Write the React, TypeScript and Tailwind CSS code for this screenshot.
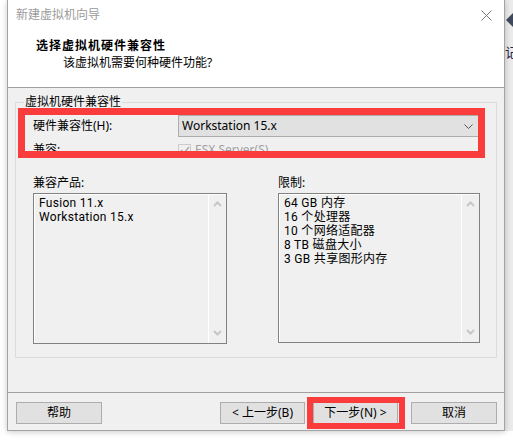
import React from "react";

const FONT = { fontFamily: '"Noto Sans", "Noto Sans CJK SC", sans-serif' };
const LIST_FONT = { fontFamily: 'Roboto, "Noto Sans CJK SC", sans-serif' };

function ScrollChevron({ up }: { up?: boolean }) {
  return (
    <svg width="9" height="6" viewBox="0 0 9 6" className="block">
      <path
        d={up ? "M1 5 L4.5 1.5 L8 5" : "M1 1 L4.5 4.5 L8 1"}
        fill="none"
        stroke="#c6c6c6"
        strokeWidth="2"
      />
    </svg>
  );
}

function ListBox({ items, width, height }: { items: string[]; width: number; height: number }) {
  return (
    <div
      className="flex border border-[#828282] bg-[#f0f0f0] shadow-[inset_1px_1px_0_#ffffff]"
      style={{ width, height }}
    >
      <div className="flex-1 pl-[5px] pt-[2px] text-[12px] leading-[14px] tracking-[0.3px] text-black" style={LIST_FONT}>
        {items.map((t) => (
          <div key={t} className="h-[14px]">
            {t}
          </div>
        ))}
      </div>
      <div className="w-[18px] border-l border-white flex flex-col items-center justify-between pt-[7px] pb-[7px]">
        <ScrollChevron up />
        <ScrollChevron />
      </div>
    </div>
  );
}

function Button({ label, width }: { label: React.ReactNode; width: number }) {
  return (
    <div
      className="h-[22px] border border-[#adadad] bg-[#e1e1e1] flex items-center justify-center text-[12px] text-black"
      style={{ width }}
    >
      {label}
    </div>
  );
}

export default function App() {
  return (
    <div className="w-[513px] h-[440px] bg-white flex overflow-hidden" style={FONT}>
      <div className="w-[7px] shrink-0" />
      {/* wizard window */}
      <div className="w-[498px] h-[431px] shrink-0 border-x border-b border-[#a3a3a3] bg-[#f0f0f0] flex flex-col shadow-[0_1px_6px_rgba(0,0,0,0.22)] z-10">
        {/* header */}
        <div className="h-[88px] bg-white border-b border-[#a0a0a0] flex flex-col">
          <div className="h-[30px] flex items-center justify-between pl-[8px] pr-[12px]">
            <span className="text-[12px] leading-[16px] text-[#9b9b9b]">新建虚拟机向导</span>
            <svg width="11" height="11" viewBox="0 0 11 11">
              <path d="M0.5 0.5 L10.5 10.5 M10.5 0.5 L0.5 10.5" stroke="#777" strokeWidth="1" />
            </svg>
          </div>
          <div className="mt-[8px] pl-[28px] text-[12px] leading-[16px] font-bold tracking-[1px] text-black">
            选择虚拟机硬件兼容性
          </div>
          <div className="mt-[1px] pl-[55px] text-[12px] leading-[16px] text-black">
            该虚拟机需要何种硬件功能?
          </div>
        </div>

        {/* body */}
        <div className="h-[304px] pt-[14px] px-[7px]">
          <div className="relative h-[256px] border border-[#dcdcdc]">
            <span className="absolute left-[8px] top-[-9px] px-[1px] bg-[#f0f0f0] text-[12px] leading-[16px] text-black">
              虚拟机硬件兼容性
            </span>

            <div className="flex items-center pl-[17px] mt-[12px]">
              <span className="w-[145px] text-[12px] leading-[16px] text-black">硬件兼容性(H):</span>
              <div className="w-[301px] h-[22px] border border-[#adadad] bg-[#e1e1e1] flex items-center justify-between pl-[3px] pr-[5px]">
                <span className="text-[12px] text-black">Workstation 15.x</span>
                <svg width="9" height="5" viewBox="0 0 9 5">
                  <path d="M0.5 0.5 L4.5 4.5 L8.5 0.5" fill="none" stroke="#555" strokeWidth="1" />
                </svg>
              </div>
            </div>

            <div className="flex items-center pl-[17px] mt-[4px] h-[18px]">
              <span className="w-[145px] text-[12px] leading-[16px] text-black">兼容:</span>
              <div className="w-[13px] h-[13px] border border-[#cccccc] bg-[#f0f0f0] flex items-center justify-center">
                <svg width="10" height="8" viewBox="0 0 10 8">
                  <path d="M1 4 L4 7 L9 1" fill="none" stroke="#a8a8a8" strokeWidth="1.4" />
                </svg>
              </div>
              <span className="ml-[4px] text-[12px] leading-[16px] text-[#a0a0a0]">ESX Server(S)</span>
            </div>

            <div className="flex pl-[17px] mt-[16px]">
              <div className="w-[194px] flex flex-col">
                <span className="text-[12px] leading-[16px] text-black mb-[2px]">兼容产品:</span>
                <ListBox items={["Fusion 11.x", "Workstation 15.x"]} width={194} height={151} />
              </div>
              <div className="w-[202px] ml-[51px] flex flex-col">
                <span className="text-[12px] leading-[16px] text-black mb-[2px]">限制:</span>
                <ListBox
                  items={["64 GB 内存", "16 个处理器", "10 个网络适配器", "8 TB 磁盘大小", "3 GB 共享图形内存"]}
                  width={202}
                  height={150}
                />
              </div>
            </div>

            {/* highlight frame */}
            <div className="absolute left-[2px] top-[5px] w-[467px] h-[50px] border-[7px] border-[#fa3c3c]" />
          </div>
        </div>

        {/* footer */}
        <div className="flex-1 border-t border-[#a0a0a0] flex items-start pt-[9px] pl-[8px] pr-[7px]">
          <Button label="帮助" width={86} />
          <div className="ml-auto flex">
            <Button label="< 上一步(B)" width={85} />
            <div className="relative ml-[8px]">
              <Button label="下一步(N) >" width={85} />
              <div className="absolute left-[-6px] top-[-5px] w-[98px] h-[32px] border-[6px] border-[#fa3c3c]" />
            </div>
            <div className="ml-[13px]">
              <Button label="取消" width={86} />
            </div>
          </div>
        </div>
      </div>

      {/* desktop sliver on the right */}
      <div className="w-[8px] h-[431px] shrink-0 bg-[#ebebeb] flex flex-col overflow-hidden">
        <svg width="8" height="16" viewBox="0 0 8 16" className="mt-[12px] ml-[1px]">
          <path d="M0 8 L8 0 L8 16 Z" fill="#3d4a5c" />
        </svg>
        <span className="mt-[16px] text-[13px] leading-[16px] text-[#2a2040] whitespace-nowrap">记</span>
      </div>
    </div>
  );
}
